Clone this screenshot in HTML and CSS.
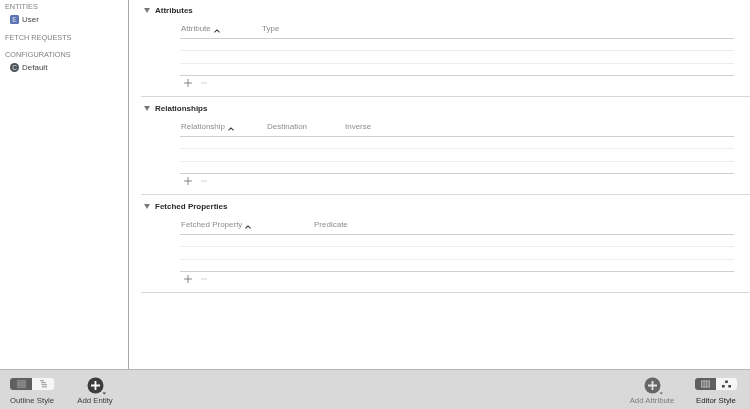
FILE: index.html
```html
<!DOCTYPE html>
<html lang="en">
<head>
<meta charset="utf-8">
<title>Data Model</title>
<link rel="stylesheet" href="styles.css">
</head>
<body>
<div class="app">
  <div class="main">
    <aside class="sidebar">
      <div class="group-title">ENTITIES</div>
      <div class="item"><span class="badge badge-e">E</span>User</div>
      <div class="group-title gap">FETCH REQUESTS</div>
      <div class="group-title gap">CONFIGURATIONS</div>
      <div class="item"><span class="badge badge-c">C</span>Default</div>
    </aside>
    <main class="editor">
      <section class="section">
        <h2 class="section-title"><svg class="tri" viewBox="0 0 7 6"><path d="M0 0h7L3.5 6z"/></svg>Attributes</h2>
        <div class="table">
          <div class="thead">
            <span class="th col-attr">Attribute<svg class="sort" viewBox="0 0 7 4"><path d="M.5 3.5 3.5.7l3 2.8"/></svg></span>
            <span class="th">Type</span>
          </div>
          <div class="row"></div><div class="row"></div><div class="row"></div>
          <div class="actions"><svg class="act" viewBox="0 0 9 9"><path d="M4.5 0v9M0 4.5h9"/></svg><svg class="act off" viewBox="0 0 9 9"><path d="M1 4.5h7"/></svg></div>
        </div>
      </section>
      <section class="section">
        <h2 class="section-title"><svg class="tri" viewBox="0 0 7 6"><path d="M0 0h7L3.5 6z"/></svg>Relationships</h2>
        <div class="table">
          <div class="thead">
            <span class="th col-rel">Relationship<svg class="sort" viewBox="0 0 7 4"><path d="M.5 3.5 3.5.7l3 2.8"/></svg></span>
            <span class="th col-dest">Destination</span>
            <span class="th">Inverse</span>
          </div>
          <div class="row"></div><div class="row"></div><div class="row"></div>
          <div class="actions"><svg class="act" viewBox="0 0 9 9"><path d="M4.5 0v9M0 4.5h9"/></svg><svg class="act off" viewBox="0 0 9 9"><path d="M1 4.5h7"/></svg></div>
        </div>
      </section>
      <section class="section">
        <h2 class="section-title"><svg class="tri" viewBox="0 0 7 6"><path d="M0 0h7L3.5 6z"/></svg>Fetched Properties</h2>
        <div class="table">
          <div class="thead">
            <span class="th col-fetch">Fetched Property<svg class="sort" viewBox="0 0 7 4"><path d="M.5 3.5 3.5.7l3 2.8"/></svg></span>
            <span class="th">Predicate</span>
          </div>
          <div class="row"></div><div class="row"></div><div class="row"></div>
          <div class="actions"><svg class="act" viewBox="0 0 9 9"><path d="M4.5 0v9M0 4.5h9"/></svg><svg class="act off" viewBox="0 0 9 9"><path d="M1 4.5h7"/></svg></div>
        </div>
      </section>
    </main>
  </div>
  <footer class="toolbar">
    <div class="tool tool-outline">
      <div class="seg">
        <span class="seg-on"><svg class="seg-icon" viewBox="0 0 9 8"><path d="M0 0h9v8H0z" fill="#8c8c8c"/><path d="M0 1.500h9M0 4h9M0 6.500h9" stroke="#6c6c6c" stroke-width=".7"/></svg></span>
        <span class="seg-off"><svg class="seg-icon" viewBox="0 0 9 8"><path d="M1 .7h4M2 2.700h5M2.500 4.700h5.500M3 6.800h5" stroke="#a8a8a8" stroke-width="1.300"/></svg></span>
      </div>
      <span class="tool-label">Outline Style</span>
    </div>
    <div class="tool tool-entity">
      <svg class="add" viewBox="0 0 20 18"><circle cx="8.500" cy="8.500" r="8" fill="#3c3c3c"/><path d="M8.500 4v9M4 8.500h9" stroke="#fff" stroke-width="1.800"/><path d="M15.500 15.500h3.500L17.250 17.500z" fill="#3c3c3c"/></svg>
      <span class="tool-label">Add Entity</span>
    </div>
    <div class="spacer"></div>
    <div class="tool tool-attr">
      <svg class="add" viewBox="0 0 20 18"><circle cx="8.500" cy="8.500" r="8" fill="#666"/><path d="M8.500 4v9M4 8.500h9" stroke="#e4e4e4" stroke-width="1.800"/><path d="M15.500 15.500h3.500L17.250 17.500z" fill="#666"/></svg>
      <span class="tool-label dim">Add Attribute</span>
    </div>
    <div class="tool tool-style">
      <div class="seg">
        <span class="seg-on"><svg class="seg-icon" viewBox="0 0 10 8"><path d="M.5.500h9v7h-9zM3.500.500v7M6.500.500v7" fill="#777" stroke="#c4c4c4" stroke-width=".9"/></svg></span>
        <span class="seg-off"><svg class="seg-icon" viewBox="0 0 10 8"><path d="M3.500 0h3v3h-3zM0 5h3v3H0zM7 5h3v3H7z" fill="#444"/></svg></span>
      </div>
      <span class="tool-label strong">Editor Style</span>
    </div>
  </footer>
</div>
</body>
</html>
```
FILE: styles.css
```css
* { box-sizing: border-box; }
html, body { margin: 0; height: 100%; overflow: hidden; }
body { font-family: "Liberation Sans", Arial, sans-serif; background: #fff; color: #333; }

.app { display: flex; flex-direction: column; height: 409px; filter: blur(.3px); }
.main { flex: 1; display: flex; min-height: 0; overflow: hidden; }

.sidebar { width: 129px; flex: none; border-right: 1px solid #a8a8a8; padding-top: 1px; }
.group-title { font-size: 7.300px; line-height: 11px; color: #7f7f7f; padding-left: 5px; }
.group-title.gap { margin-top: 6px; }
.item { display: flex; align-items: center; gap: 3px; height: 14px; padding-left: 10px; font-size: 8px; color: #444; }
.badge { width: 9px; height: 9px; display: flex; align-items: center; justify-content: center; color: #e8e8e8; font-size: 6.500px; flex: none; }
.badge-e { background: #5b74b4; border-radius: 1.500px; }
.badge-c { background: #4d5559; border-radius: 50%; }

.editor { flex: 1; min-width: 0; padding-left: 12px; margin-top: -1px; }
.section { height: 98px; border-bottom: 1px solid #d8d8d8; padding-top: 5px; }
.section-title { display: flex; align-items: center; height: 13px; margin: 0; font-size: 8px; font-weight: bold; color: #2a2a2a; padding-left: 3px; }
.tri { width: 6px; height: 5px; margin-right: 5px; fill: #777; }

.table { margin: 0 16px 0 39px; }
.thead { display: flex; align-items: center; height: 22px; padding: 1px 0 0 1px; border-bottom: 1px solid #cfcfcf; }
.th { font-size: 8px; color: #8c8c8c; display: flex; align-items: center; }
.col-attr { width: 81px; }
.col-rel { width: 86px; }
.col-dest { width: 78px; }
.col-fetch { width: 133px; }
.sort { width: 6px; height: 4px; margin: 5px 0 0 3px; fill: none; stroke: #333; stroke-width: 1.200; }
.row { height: 12.300px; border-bottom: 1px solid #ececec; }
.row:nth-of-type(4) { border-bottom-color: #cfcfcf; }
.actions { display: flex; align-items: center; gap: 8px; height: 15px; padding-left: 4px; }
.act { width: 8px; height: 8px; stroke: #6a6a6a; stroke-width: .9; fill: none; }
.act.off { stroke: #c8c8c8; }

.toolbar { height: 40px; flex: none; display: flex; background: #d9d9d9; border-top: 1px solid #b5b5b5; padding-top: 7px; }
.tool { display: flex; flex-direction: column; align-items: center; height: 30px; }
.tool-outline { width: 44px; margin-left: 10px; }
.tool-entity { width: 40px; margin-left: 21px; }
.tool-attr { width: 50px; margin-right: -2px; }
.tool-style { width: 42px; margin: 0 13px 0 20px; }
.spacer { flex: 1; }
.tool-label { font-size: 7.800px; line-height: 11px; color: #3a3a3a; white-space: nowrap; margin-top: 3px; }
.tool-label.dim { color: #7b7b7b; }
.tool-label.strong { color: #222; }

.seg { display: flex; width: 100%; height: 12px; border-radius: 3px; overflow: hidden; margin-top: 1px; margin-bottom: 2px; }
.seg-on, .seg-off { width: 50%; display: flex; align-items: center; justify-content: center; }
.seg-on { background: #5f5f5f; }
.seg-off { background: #f6f6f6; }
.seg-icon { width: 9px; height: 8px; }
.add { width: 20px; height: 18px; margin-left: 4px; }
.add + .tool-label { margin-top: 0; }
```
